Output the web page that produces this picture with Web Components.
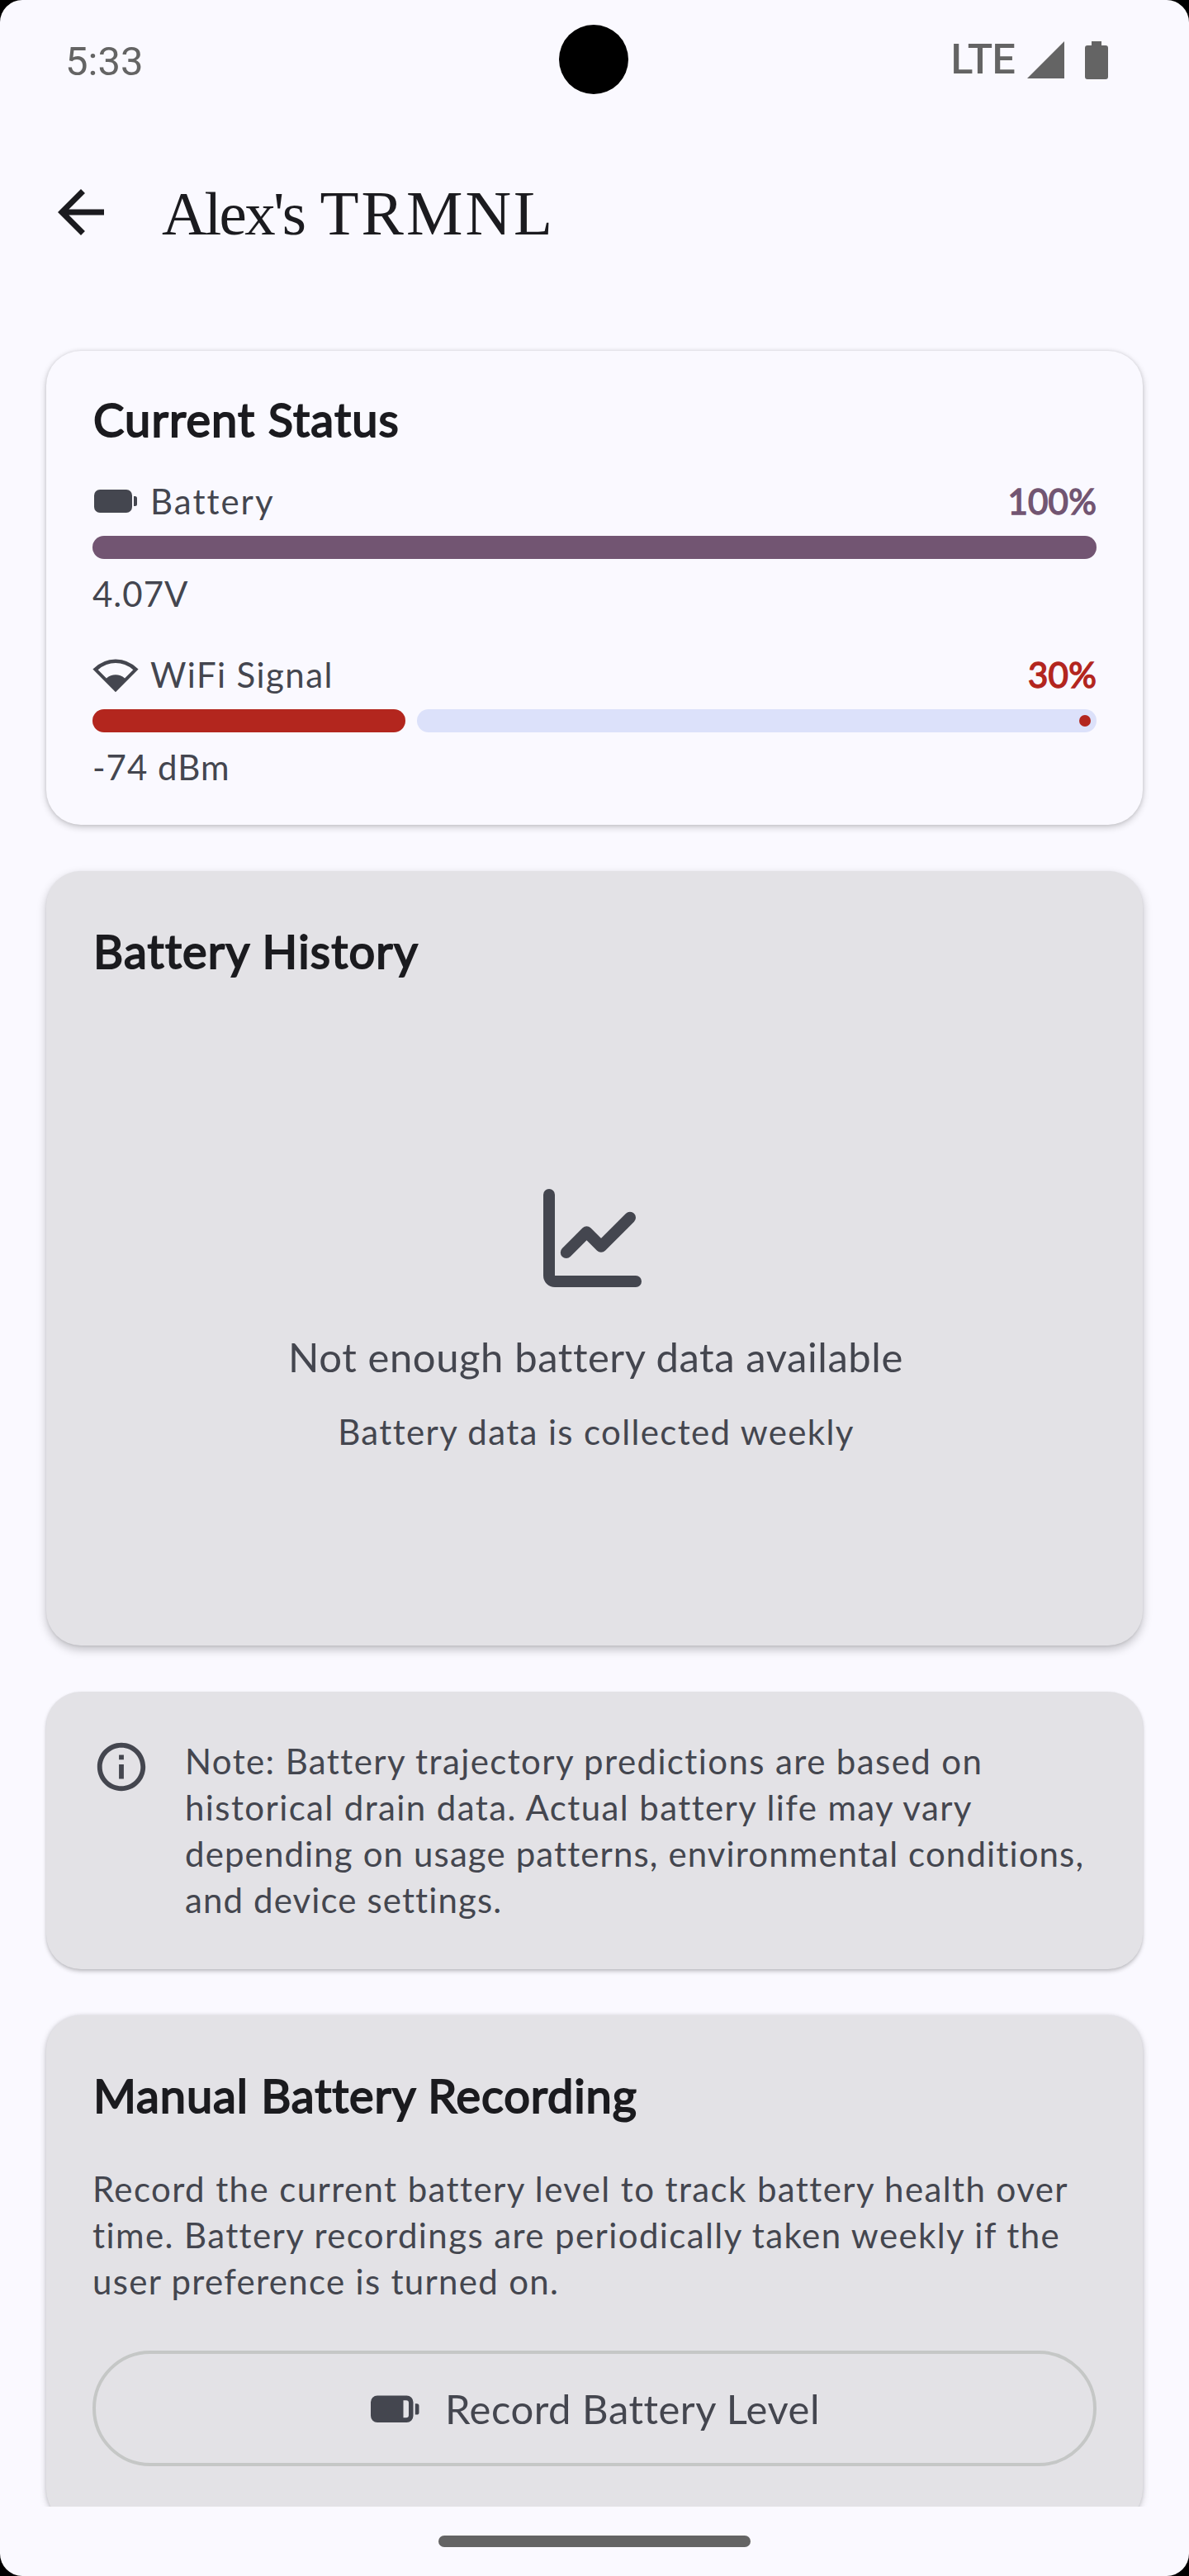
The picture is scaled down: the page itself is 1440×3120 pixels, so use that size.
<!DOCTYPE html>
<html lang="en">
<head>
<meta charset="utf-8">
<title>Alex's TRMNL</title>
<style>
html,body{margin:0;padding:0;background:#000}
body{width:1440px;height:3120px;overflow:hidden;font-family:"Lato","Open Sans",sans-serif;font-variant-ligatures:none}
</style>
</head>
<body>
<device-screen>
  <status-bar slot="status" time="5:33" network="LTE"></status-bar>
  <app-bar slot="bar"><span style="font-size:75px;letter-spacing:-2.700px">Alex's</span> <span style="letter-spacing:3px">TRMNL</span></app-bar>

  <elevated-card compact level="2">
    <card-title style="--track:1.150px">Current Status</card-title>
    <level-meter style="--gap:28px;--tone:#725572;--label-track:2px" value="100" label="Battery" detail="4.07V"><ui-icon name="battery"></ui-icon></level-meter>
    <level-meter style="--gap:42px;--tone:#b3261e" value="30" label="WiFi Signal" detail="-74 dBm"><ui-icon name="wifi"></ui-icon></level-meter>
  </elevated-card>

  <elevated-card filled level="3" style="height:938px">
    <card-title style="--track:1.200px">Battery History</card-title>
    <empty-state>
      <ui-icon name="chart"></ui-icon>
      <span slot="head">Not enough battery data available</span>
      <span slot="sub">Battery data is collected weekly</span>
    </empty-state>
  </elevated-card>

  <elevated-card filled level="1">
    <info-note>Note: Battery trajectory predictions are based on historical drain data. Actual battery life may vary <span style="letter-spacing:1.120px">depending on usage patterns, environmental conditions, and device settings.</span></info-note>
  </elevated-card>

  <elevated-card filled level="2" style="height:616px">
    <card-title style="--track:.9px">Manual Battery Recording</card-title>
    <body-text>Record the current battery level to track battery health over time. Battery recordings are periodically taken weekly if the <span style="letter-spacing:1.300px">user preference is turned on.</span></body-text>
    <outlined-button><ui-icon slot="icon" name="battery-low"></ui-icon>Record Battery Level</outlined-button>
  </elevated-card>
</device-screen>

<script>
const define = (name, render) => customElements.define(name, class extends HTMLElement {
  constructor() {
    super();
    this.attachShadow({ mode: 'open' });
  }
  connectedCallback() {
    this.shadowRoot.innerHTML = render(this);
  }
});

const ICONS = {
  back: [84, 84, '0 0 24 24', '<path d="M20 11H7.83l5.59-5.59L12 4l-8 8 8 8 1.41-1.41L7.83 13H20v-2z"/>'],
  battery: [56, 56, '0 0 56 56', '<rect x="2" y="14" width="46" height="28" rx="7"/><path d="M50 22h1.500q2.500 0 2.500 2.500v7q0 2.500-2.500 2.500H50z"/>'],
  wifi: [56, 56, '0 0 56 56', '<path fill-rule="evenodd" d="M28 49.200 .4 21.400Q12.500 9.500 28 9.500T55.600 21.400zM6.700 22.200 16.900 32.500Q22 28.300 28 28.300T39.100 32.500L49.300 22.200Q39.500 14.100 28 14.100T6.700 22.200z"/>'],
  chart: [124, 120, '658 1440 124 120', '<path d="M658 1447a7 7 0 0 1 14 0v98h98a7 7 0 0 1 0 14h-98a14 14 0 0 1-14-14z"/><path d="M685.800 1517 710.500 1492.300 728 1509.800 763 1474.800" fill="none" stroke="currentColor" stroke-width="14" stroke-linecap="round" stroke-linejoin="round"/>'],
  info: [70, 70, '0 0 24 24', '<path d="M11 7h2v2h-2zm0 4h2v6h-2zm1-9C6.480 2 2 6.480 2 12s4.480 10 10 10 10-4.480 10-10S17.520 2 12 2zm0 18c-4.410 0-8-3.590-8-8s3.590-8 8-8 8 3.590 8 8-3.590 8-8 8z"/>'],
  'battery-low': [63, 63, '0 0 63 63', '<path fill-rule="evenodd" d="M10 15.500H45.500a8 8 0 0 1 8 8V40a8 8 0 0 1-8 8H10a8 8 0 0 1-8-8V23.500a8 8 0 0 1 8-8zM41.500 21.300v21h3.500a3 3 0 0 0 3-3v-15a3 3 0 0 0-3-3z"/><path d="M55.800 25.200h2q2.700 0 2.700 2.700v8q0 2.700-2.700 2.700h-2z"/>'],
  cell: [45, 45, '0 0 45 45', '<path d="M0 45 45 0V45z"/>'],
  power: [28, 46, '0 0 28 46', '<path d="M8 0h12v5h5q3 0 3 3v35q0 3-3 3H3q-3 0-3-3V8q0-3 3-3h5z"/>']
};

define('ui-icon', el => {
  const [w, h, box, body] = ICONS[el.getAttribute('name')];
  return `<style>:host{display:block;flex:none;width:${w}px;height:${h}px}svg{display:block;fill:currentColor}</style>
  <svg width="${w}" height="${h}" viewBox="${box}" aria-hidden="true">${body}</svg>`;
});

define('device-screen', () => `<style>
  :host{display:flex;flex-direction:column;width:1440px;height:3120px;border-radius:27px;overflow:hidden;background:#faf9ff;color:#44464f}
  main{flex:1;min-height:0;overflow:hidden;display:flex;flex-direction:column;gap:56px;padding:69px 56px 0;box-sizing:border-box}
  footer{flex:none;height:84px;display:flex;justify-content:center;align-items:flex-start;padding-top:35px;box-sizing:border-box}
  i{display:block;width:378px;height:14px;border-radius:7px;background:#646464}
</style><slot name="status"></slot><slot name="bar"></slot><main><slot></slot></main><footer><i></i></footer>`);

define('status-bar', el => `<style>
  :host{display:grid;grid-template-columns:1fr 84px 1fr;height:145px;flex:none;color:#646464;font-family:Roboto,sans-serif;padding:0 98px 0 79px;box-sizing:border-box}
  time{font-size:49px;line-height:58px;padding-top:46px}
  b{width:84px;height:84px;border-radius:50%;background:#000;margin:30px 0 0 8px}
  div{display:flex;justify-content:flex-end;align-items:flex-start;padding-top:50px}
  span{font-size:50px;line-height:58px;letter-spacing:-.7px;font-weight:500;margin:-7px 15px 0 0}
  .p{margin-left:25px}
</style><time>${el.getAttribute('time')}</time><b></b>
<div><span>${el.getAttribute('network')}</span><ui-icon name="cell"></ui-icon><ui-icon class="p" name="power"></ui-icon></div>`);

define('app-bar', () => `<style>
  :host{display:flex;align-items:flex-start;height:211px;flex:none;padding:0 56px;box-sizing:border-box;color:#1b1b1f;gap:56px}
  ui-icon{margin-top:70px}
  h1{margin:64px 0 0;font:400 77px/98px "Liberation Serif",serif;white-space:nowrap}
</style><ui-icon name="back"></ui-icon><h1><slot></slot></h1>`);

define('elevated-card', el => {
  const shadow = {
    1: '0 3px 5px rgba(0,0,0,.2),0 1px 3px rgba(0,0,0,.08)',
    2: '0 3px 8px rgba(0,0,0,.2),0 0 4px rgba(0,0,0,.1)',
    3: '0 5px 12px rgba(0,0,0,.23),0 1px 3px rgba(0,0,0,.08)'
  }[el.getAttribute('level')];
  return `<style>
  :host{display:flex;flex-direction:column;flex:none;box-sizing:border-box;border-radius:42px;padding:56px;background:#faf9ff;box-shadow:${shadow}}
  :host([compact]){padding-block:42px}
  :host([filled]){background:#e3e2e6}
</style><slot></slot>`;
});

define('card-title', () => `<style>
  :host{display:block;flex:none}
  h2{margin:-1px 0 1px;padding-left:1px;font-size:56px;line-height:84px;font-weight:400;-webkit-text-stroke:2px currentColor;letter-spacing:var(--track,1px);color:#1b1b1f;white-space:nowrap}
</style><h2><slot></slot></h2>`);

define('level-meter', el => {
  const v = +el.getAttribute('value');
  const rest = v < 100 ? '<s><u></u></s>' : '';
  return `<style>
  :host{display:flex;flex-direction:column;gap:14px;margin-top:var(--gap);font-size:42px;line-height:56px;letter-spacing:1.400px}
  .row{display:flex;align-items:center;gap:14px;height:56px}
  .row span{letter-spacing:var(--label-track,1.400px)}
  .detail{letter-spacing:1px}
  strong{margin-left:auto;color:var(--tone);font-weight:400;-webkit-text-stroke:1.500px currentColor;letter-spacing:.2px}
  .bar{display:flex;gap:14px;height:28px}
  em{flex:none;width:${v < 100 ? 379 : 1216}px;border-radius:14px;background:var(--tone)}
  s{flex:1;display:flex;align-items:center;justify-content:flex-end;padding-right:7px;border-radius:14px;background:#dce1fa}
  u{width:14px;height:14px;border-radius:50%;background:var(--tone)}
</style><div class="row"><slot></slot><span>${el.getAttribute('label')}</span><strong>${v}%</strong></div>
<div class="bar"><em></em>${rest}</div><div class="detail">${el.getAttribute('detail')}</div>`;
});

define('empty-state', () => `<style>
  :host{display:flex;flex-direction:column;align-items:center;padding-top:245px}
  .h{font-size:49px;line-height:70px;letter-spacing:.57px;margin-top:48px;padding-left:3px}
  .s{font-size:42px;line-height:56px;letter-spacing:1.360px;margin-top:28px;padding-left:4px}
</style><slot></slot><div class="h"><slot name="head"></slot></div><div class="s"><slot name="sub"></slot></div>`);

define('info-note', () => `<style>
  :host{display:flex;gap:42px;align-items:flex-start}
  p{margin:0;flex:1;font-size:42px;line-height:56px;letter-spacing:1.400px}
</style><ui-icon name="info"></ui-icon><p><slot></slot></p>`);

define('body-text', () => `<style>
  :host{display:block;margin-top:42px;font-size:42px;line-height:56px;letter-spacing:1.400px}
</style><slot></slot>`);

define('outlined-button', () => `<style>
  :host{display:block;margin-top:56px}
  button{display:flex;align-items:center;justify-content:center;gap:29px;width:100%;height:140px;box-sizing:border-box;border:4px solid #c5c7c6;border-radius:70px;background:none;padding:0;color:inherit;font:400 49px/70px "Lato",sans-serif;letter-spacing:.5px}
</style><button><slot name="icon"></slot><span><slot></slot></span></button>`);
</script>
</body>
</html>
